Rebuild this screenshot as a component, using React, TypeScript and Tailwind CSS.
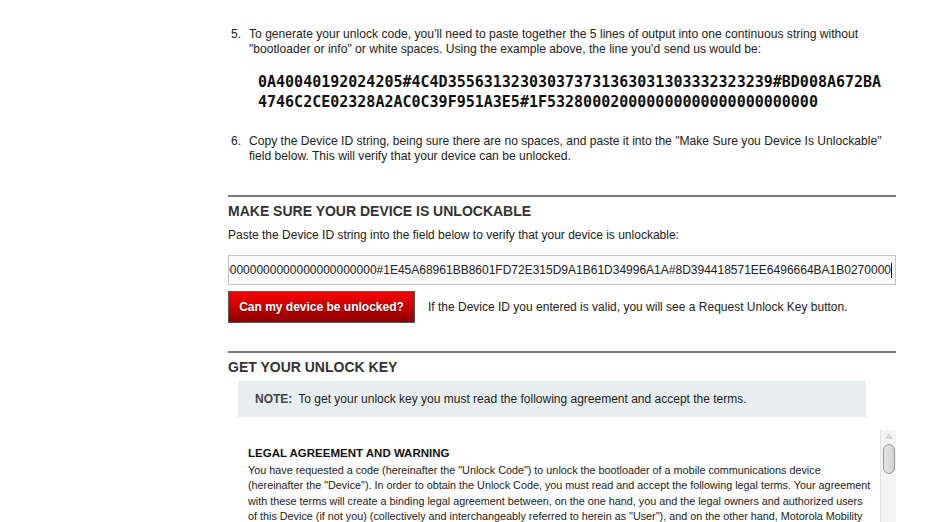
import React from "react";

const body = "font-['Liberation_Sans',Arial,sans-serif]";

function Step({ n, children }: { n: number; children: React.ReactNode }) {
  return (
    <div className="flex text-[12.1px] leading-[15px] text-[#222]">
      <span className="w-[21px] shrink-0 pl-[3px]">{n}.</span>
      <div className="flex-1">{children}</div>
    </div>
  );
}

function FakeScrollbar() {
  return (
    <div className="w-[16px] shrink-0 bg-[#f3f3f3] border-l border-[#e4e4e4] flex flex-col items-center pt-[3px]">
      <div className="w-0 h-0 border-l-[4px] border-r-[4px] border-b-[6px] border-l-transparent border-r-transparent border-b-[#d6d6d6]" />
      <div className="mt-[5px] w-[12px] h-[30px] rounded-[6px] border border-[#9a9a9a] bg-gradient-to-r from-[#e6e6e6] to-[#d2d2d2]" />
    </div>
  );
}

const legalLines = [
  'You have requested a code (hereinafter the "Unlock Code") to unlock the bootloader of a mobile communications device',
  '(hereinafter the "Device"). In order to obtain the Unlock Code, you must read and accept the following legal terms. Your agreement',
  "with these terms will create a binding legal agreement between, on the one hand, you and the legal owners and authorized users",
  'of this Device (if not you) (collectively and interchangeably referred to herein as "User"), and on the other hand, Motorola Mobility',
  "LLC and its affiliates.",
];

export default function App() {
  const deviceId =
    "0A40040192024205#4C4D355631323030373731363031303332323239#BD008A672BA4746C2CE02328A2AC0C39F951A3E5#1F53280002000000000000000000000000#1E45A68961BB8601FD72E315D9A1B61D34996A1A#8D394418571EE6496664BA1B0270000";

  return (
    <div className={`${body} bg-white w-[946px] h-[522px] overflow-hidden`}>
      <div className="ml-[228px] w-[668px] pt-[27px]">
        <Step n={5}>
          To generate your unlock code, you’ll need to paste together the 5 lines of output into one continuous string without
          "bootloader or info" or white spaces. Using the example above, the line you’d send us would be:
        </Step>

        <div className="mt-[15px] ml-[30px] font-['DejaVu_Sans_Mono',monospace] font-bold text-[15px] leading-[20px] text-[#111]">
          <div>0A40040192024205#4C4D355631323030373731363031303332323239#BD008A672BA</div>
          <div>4746C2CE02328A2AC0C39F951A3E5#1F53280002{"0".repeat(22)}</div>
        </div>

        <div className="mt-[22px]">
          <Step n={6}>
            Copy the Device ID string, being sure there are no spaces, and paste it into the "Make Sure you Device Is Unlockable"
            field below. This will verify that your device can be unlocked.
          </Step>
        </div>

        <div className="mt-[31px] border-t-2 border-[#7a7a7a]" />

        <h2 className="mt-[5px] text-[14px] leading-[18px] font-bold text-[#333]">MAKE SURE YOUR DEVICE IS UNLOCKABLE</h2>
        <p className="mt-[8px] text-[12px] leading-[15px] text-[#222]">
          Paste the Device ID string into the field below to verify that your device is unlockable:
        </p>

        <div className="mt-[12px] h-[30px] border border-[#c4c4c4] bg-[#fafafa] flex items-center justify-end overflow-hidden pr-[3px]">
          <span className="whitespace-nowrap text-[12px] text-[#222]">{deviceId}</span>
          <span className="w-px h-[15px] bg-[#111] shrink-0" />
        </div>

        <div className="mt-[6px] flex items-center">
          <button className="w-[187px] h-[32px] border border-[#5a5a5a] bg-gradient-to-b from-[#f50000] via-[#cc0000] to-[#8a0000] text-white text-[12px] font-bold [text-shadow:0_1px_1px_rgba(0,0,0,0.6)]">
            Can my device be unlocked?
          </button>
          <span className="ml-[13px] text-[12px] text-[#222]">
            If the Device ID you entered is valid, you will see a Request Unlock Key button.
          </span>
        </div>

        <div className="mt-[28px] border-t-2 border-[#7a7a7a]" />

        <h2 className="mt-[5px] text-[14px] leading-[18px] font-bold text-[#333]">GET YOUR UNLOCK KEY</h2>

        <div className="mt-[5px] ml-[10px] w-[628px] h-[36px] bg-[#e8eef0] flex items-center pl-[17px] text-[12px]">
          <span className="font-bold text-[#444]">NOTE:</span>
          <span className="ml-[6px] text-[#222]">To get your unlock key you must read the following agreement and accept the terms.</span>
        </div>

        <div className="mt-[13px] flex h-[120px]">
          <div className="flex-1 min-w-0 pl-[20px] pt-[16px] overflow-hidden">
            <h3 className="text-[11.5px] leading-[15px] font-bold text-[#111]">LEGAL AGREEMENT AND WARNING</h3>
            <p className="mt-[2px] text-[10.8px] leading-[15.3px] text-[#222] whitespace-nowrap">
              {legalLines.map((l, i) => (
                <span key={i} className="block">
                  {l}
                </span>
              ))}
            </p>
          </div>
          <FakeScrollbar />
        </div>
      </div>
    </div>
  );
}
